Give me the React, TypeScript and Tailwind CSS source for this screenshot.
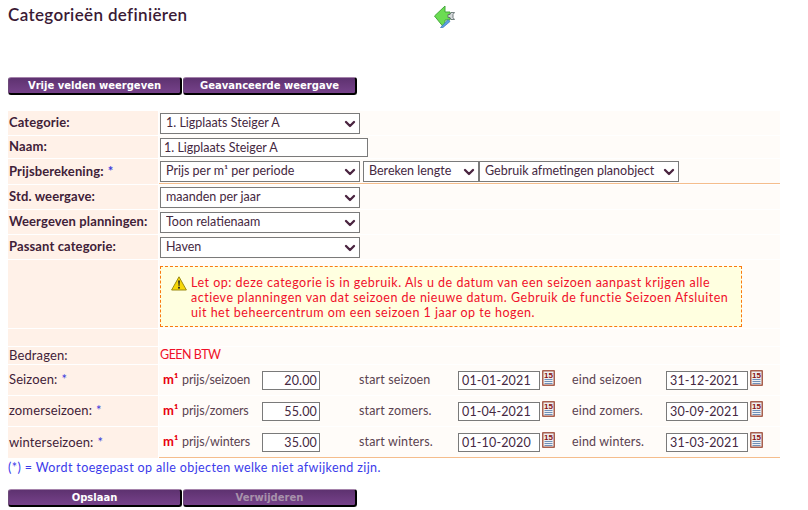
import { ChevronDown } from "lucide-react";

const FONT = "font-['Lato','Open_Sans',sans-serif]";

function PurpleButton({ label, muted }: { label: string; muted?: boolean }) {
  return (
    <button
      className={`h-[18px] w-[174px] rounded-[3px] border-t border-t-[#a583ab] border-l border-l-[#6d4a78] border-r-2 border-r-black border-b-2 border-b-black bg-gradient-to-b from-[#5e3270] to-[#76428a] text-[10px] leading-[14px] font-['DejaVu_Sans',sans-serif] font-bold ${
        muted ? "text-[#a892ab]" : "text-white"
      }`}
    >
      {label}
    </button>
  );
}

function Select({ value, width }: { value: string; width: string }) {
  return (
    <div className={`relative h-[21px] shrink-0 ${width}`}>
      <select
        defaultValue={value}
        className="block h-full w-full appearance-none border border-[#7a7a7a] bg-white pl-[5px] text-[12.5px] text-[#45283f] outline-none"
      >
        <option>{value}</option>
      </select>
      <ChevronDown
        size={16}
        strokeWidth={3.5}
        className="pointer-events-none absolute top-[3px] right-[2px] text-[#4a2440]"
      />
    </div>
  );
}

function Row({
  label,
  star,
  bold = true,
  height,
  line,
  children,
}: {
  label?: string;
  star?: boolean;
  bold?: boolean;
  height: string;
  line?: boolean;
  children?: React.ReactNode;
}) {
  return (
    <div className={`flex ${height}`}>
      <div
        className={`flex w-[150px] shrink-0 items-center bg-[#fff1e8] pl-px text-[13px] tracking-[0.12px] text-[#3f2138] ${
          bold ? "font-bold" : ""
        }`}
      >
        {label}
        {star && <span className="ml-1 text-[#3b3bdc]">*</span>}
      </div>
      <div
        className={`ml-px flex flex-1 items-center gap-[3px] bg-[#fffcf9] pl-px ${
          line ? "border-b border-b-[#f5bd8c]" : ""
        }`}
      >
        {children}
      </div>
    </div>
  );
}

function WarningIcon() {
  return (
    <svg width="16" height="15" viewBox="0 0 16 15" className="mt-px shrink-0">
      <path d="M8 .8 15.4 14H.6Z" fill="#f7d707" stroke="#9b8a12" strokeWidth="1" strokeLinejoin="round" />
      <path d="M7.1 4.6h1.8L8.5 10h-.9Z" fill="#222" />
      <rect x="7.1" y="10.8" width="1.8" height="1.8" fill="#222" />
    </svg>
  );
}

function BackIcon() {
  return (
    <svg width="23" height="24" viewBox="0 0 23 24" className="shrink-0">
      <path d="M11 2 .5 12 9 22.5l2-2.5v-4h5V8h-5Z" fill="#6bdc52" stroke="#46a83c" strokeWidth="1" strokeLinejoin="round" />
      <path d="M7 23 14 15.5l2 2L9 23.5l-2.5.5Z" fill="#5b9fe3" stroke="#2e6cae" strokeWidth=".6" />
      <path d="M14 10.5h2l1-2h3.5l-1.5 2v3l1.5 2H17l-1-2h-2Z" fill="#d4d8da" stroke="#566365" strokeWidth=".8" />
    </svg>
  );
}

function CalendarIcon() {
  return (
    <svg width="13" height="16" viewBox="0 0 13 16" className="mb-[5px] ml-[2px] shrink-0">
      <rect width="13" height="16" fill="#a9604f" rx="1" />
      <rect x="1.5" y="1.5" width="10" height="13" fill="#eef0f2" />
      <text x="6.5" y="8" textAnchor="middle" fontSize="8" fontWeight="700" fontFamily="Liberation Sans, sans-serif" fill="#8a1010">
        15
      </text>
      <path d="M2.5 9.5h8M2.5 11.5h8M2.5 13.5h8" stroke="#6f8fb8" strokeWidth="1" />
    </svg>
  );
}

function AmountRow({
  label,
  height,
  price,
  priceLabel,
  startLabel,
  start,
  endLabel,
  end,
  line,
}: {
  label: string;
  height: string;
  price: string;
  priceLabel: string;
  startLabel: string;
  start: string;
  endLabel: string;
  end: string;
  line?: boolean;
}) {
  return (
    <Row label={label} star bold={false} height={height} line={line}>
      <div className="flex w-full items-center text-[12.5px] tracking-[0.15px] text-[#5b4350]">
        <span className="ml-[3px] w-[19px] text-[13px] font-bold text-[#e8000d]">m¹</span>
        <span className="w-[80px] tracking-[-0.1px]">{priceLabel}</span>
        <input
          readOnly
          value={price}
          className="h-[19px] w-[58px] border border-[#7a7a7a] bg-white pr-[2px] text-right text-[#45283f] outline-none"
        />
        <span className="ml-[39px] w-[99px]">{startLabel}</span>
        <input
          readOnly
          value={start}
          className="mt-px h-[19px] w-[82px] border border-[#7a7a7a] bg-white pl-[3px] text-[#45283f] outline-none"
        />
        <CalendarIcon />
        <span className="ml-[17px] w-[94px]">{endLabel}</span>
        <input
          readOnly
          value={end}
          className="mt-px h-[19px] w-[82px] border border-[#7a7a7a] bg-white pl-[3px] text-[#45283f] outline-none"
        />
        <CalendarIcon />
      </div>
    </Row>
  );
}

export default function App() {
  return (
    <div className={`h-[510px] w-[808px] overflow-hidden bg-white pl-2 ${FONT}`}>
      <div className="flex h-[77px] items-start">
        <h1 className="mt-[5px] w-[426px] text-[17px] leading-[20px] font-semibold tracking-[0.35px] text-[#3a1a35]">
          Categorieën definiëren
        </h1>
        <div className="mt-[4px]">
          <BackIcon />
        </div>
      </div>

      <div className="flex gap-px">
        <PurpleButton label="Vrije velden weergeven" />
        <PurpleButton label="Geavanceerde weergave" />
      </div>

      <div className="mt-4 flex w-[772px] flex-col gap-px">
        <Row label="Categorie:" height="h-[24px]">
          <Select value="1. Ligplaats Steiger A" width="w-[200px]" />
        </Row>
        <Row label="Naam:" height="h-[22px]">
          <input
            readOnly
            value="1. Ligplaats Steiger A"
            className="h-[19px] w-[208px] border border-[#7a7a7a] bg-white pl-[3px] text-[12.5px] text-[#45283f] outline-none"
          />
        </Row>
        <Row label="Prijsberekening:" star height="h-[25px]" line>
          <Select value="Prijs per m¹ per periode" width="w-[200px]" />
          <Select value="Bereken lengte" width="w-[116px]" />
          <div className="-ml-[3px]">
            <Select value="Gebruik afmetingen planobject" width="w-[200px]" />
          </div>
        </Row>
        <Row label="Std. weergave:" height="h-[24px]">
          <Select value="maanden per jaar" width="w-[200px]" />
        </Row>
        <Row label="Weergeven planningen:" height="h-[24px]">
          <Select value="Toon relatienaam" width="w-[200px]" />
        </Row>
        <Row label="Passant categorie:" height="h-[24px]">
          <Select value="Haven" width="w-[200px]" />
        </Row>
        <Row height="h-[68px]">
          <div className="mt-[6px] flex h-[61px] w-[582px] gap-[4px] self-start border border-dashed border-[#f97a10] bg-[#ffffe0] pt-[8px] pl-[10px] text-[12.5px] leading-[15px] tracking-[0.5px] text-[#f0102a]">
            <WarningIcon />
            <p className="w-[540px]">
              Let op: deze categorie is in gebruik. Als u de datum van een seizoen aanpast krijgen alle actieve
              planningen van dat seizoen de nieuwe datum. Gebruik de functie Seizoen Afsluiten uit het
              beheercentrum om een seizoen 1 jaar op te hogen.
            </p>
          </div>
        </Row>
        <Row height="h-[17px]" />
        <Row label="Bedragen:" bold={false} height="h-[17px]">
          <span className="text-[12.5px] tracking-[-0.5px] text-[#f0102a]">GEEN BTW</span>
        </Row>
        <AmountRow
          label="Seizoen:"
          height="h-[30px]"
          priceLabel="prijs/seizoen"
          price="20.00"
          startLabel="start seizoen"
          start="01-01-2021"
          endLabel="eind seizoen"
          end="31-12-2021"
        />
        <AmountRow
          label="zomerseizoen:"
          height="h-[30px]"
          priceLabel="prijs/zomers"
          price="55.00"
          startLabel="start zomers."
          start="01-04-2021"
          endLabel="eind zomers."
          end="30-09-2021"
        />
        <AmountRow
          label="winterseizoen:"
          height="h-[31px]"
          priceLabel="prijs/winters"
          price="35.00"
          startLabel="start winters."
          start="01-10-2020"
          endLabel="eind winters."
          end="31-03-2021"
          line
        />
      </div>

      <p className="mt-[2px] text-[12.5px] leading-[15px] tracking-[0.38px] text-[#3b3bea]">
        (*) = Wordt toegepast op alle objecten welke niet afwijkend zijn.
      </p>

      <div className="mt-[14px] flex gap-px">
        <PurpleButton label="Opslaan" />
        <PurpleButton label="Verwijderen" muted />
      </div>
    </div>
  );
}
